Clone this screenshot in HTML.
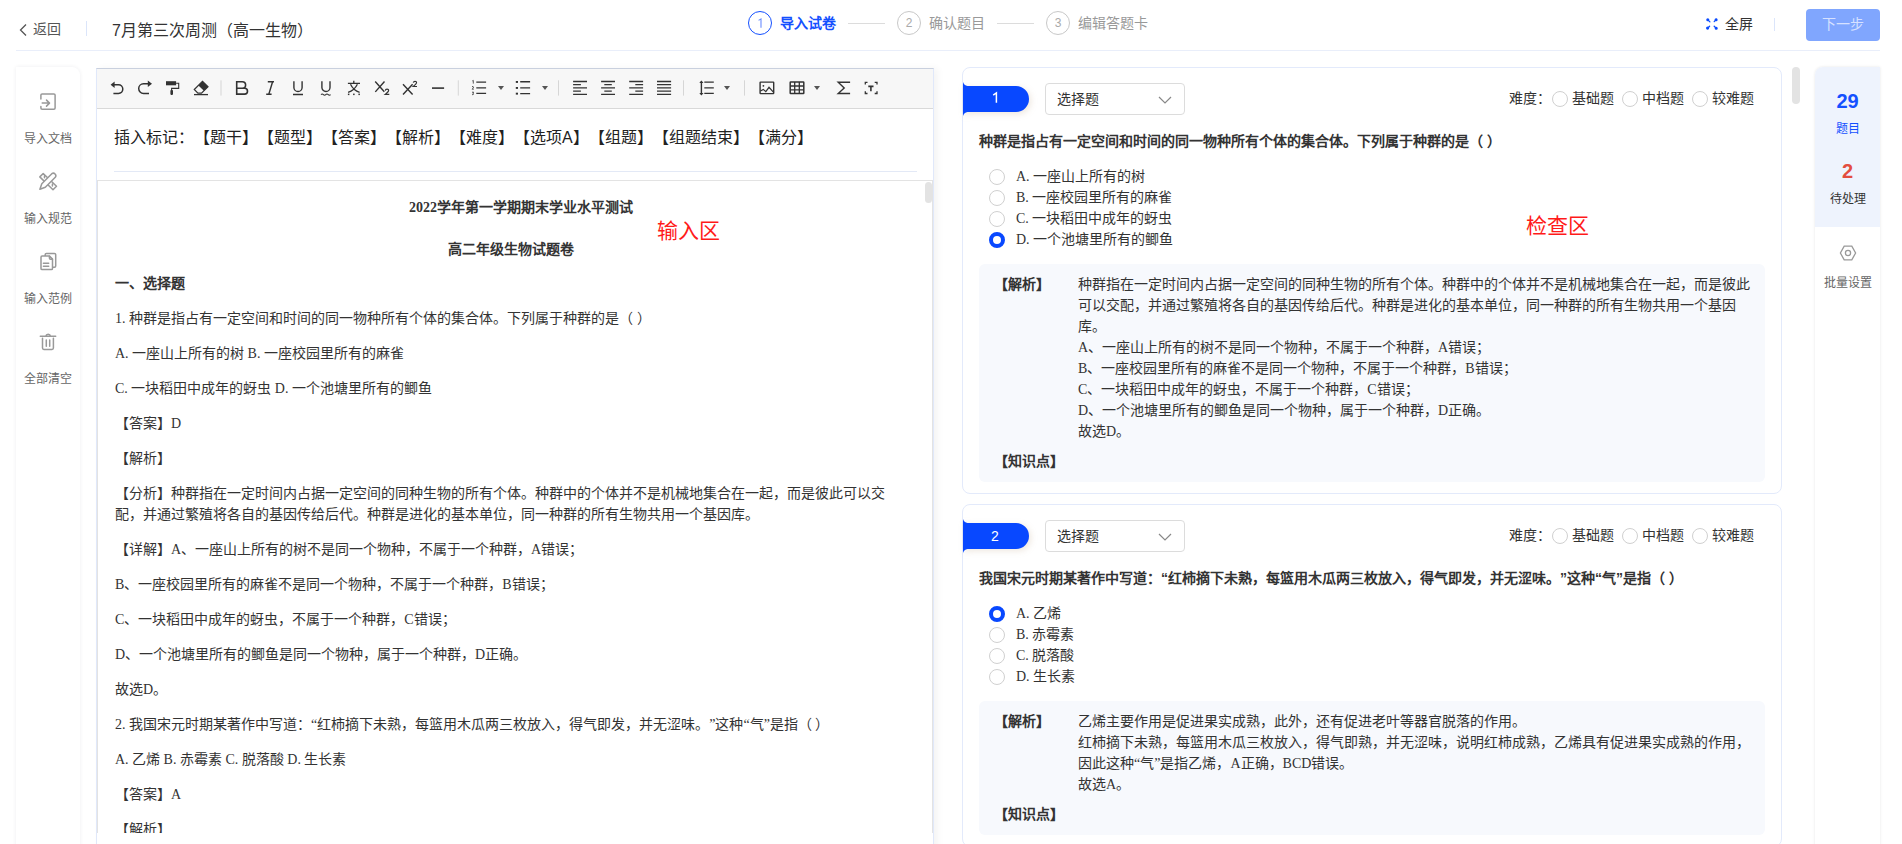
<!DOCTYPE html>
<html lang="zh-CN"><head><meta charset="utf-8">
<style>
*{box-sizing:border-box;margin:0;padding:0;text-spacing-trim:space-all}
html,body{width:1902px;height:844px;overflow:hidden;background:#fff;font-family:"Liberation Sans",sans-serif;color:#333}
.abs{position:absolute;white-space:nowrap}
.hdrline{position:absolute;left:16px;top:50px;width:1864px;height:1px;background:#e9eefa}
.sidebar{position:absolute;left:16px;top:67px;width:64px;height:800px;background:#fff;border-radius:0 8px 0 0;box-shadow:0 0 4px rgba(0,20,60,.07)}
.sb-item{position:absolute;left:0;width:64px;text-align:center;font-size:12px;color:#666}
.editor{position:absolute;left:96px;top:68px;width:838px;height:800px;border:1px solid #e0e8fa;border-top-color:#c9d0de;background:#fff;box-shadow:4px 0 7px rgba(0,0,0,.045)}
.toolbar{position:absolute;left:0;top:0;width:836px;height:40px;background:#f7f7f7;border-bottom:1px solid #d9d9d9}
.serif{font-family:"Liberation Serif",serif}
.ed-content{position:absolute;left:0;top:111px;width:836px;height:653px;border:1px solid #e3e3e3;border-bottom:none;overflow:hidden}
.ln{position:absolute;left:17px;font-size:14px;line-height:21px;color:#333;white-space:nowrap;font-family:"Liberation Serif",serif}
.card{position:absolute;left:962px;width:820px;border:1px solid #e3eafb;border-radius:8px;background:#fff}
.tag{position:absolute;left:0;width:67px;height:26px;background:#0848ff;border-radius:0 13px 13px 0;color:#fff;font-size:14px;text-align:center;line-height:26px;box-shadow:2px 2px 6px rgba(200,160,120,.25)}
.sel{position:absolute;left:82px;width:140px;height:32px;border:1px solid #dcdcdc;border-radius:4px;font-size:14px;line-height:30px;padding-left:11px;color:#333}
.diff{position:absolute;left:546px;font-size:14px;color:#333;line-height:20px;margin-top:-1px}
.radio{display:inline-block;width:16px;height:16px;border:1px solid #d0d0d0;border-radius:50%;vertical-align:middle;background:#fff}
.radio.on{border:4.5px solid #0848ff}
.q{position:absolute;left:16px;font-size:14px;font-weight:bold;color:#333;line-height:20px;white-space:nowrap;font-family:"Liberation Sans",sans-serif}
.opt{position:absolute;left:26px;font-size:14px;line-height:21px;white-space:nowrap;font-family:"Liberation Serif",serif;color:#333}
.opt .radio{position:absolute;left:0;top:3px}
.opt span.t{position:absolute;left:27px;top:0}
.ana{position:absolute;left:16px;width:786px;background:#f7f9fd;border-radius:6px}
.ana .lbl{position:absolute;left:15px;font-size:14px;font-weight:bold;line-height:21px;font-family:"Liberation Sans",sans-serif;color:#333}
.ana .body{position:absolute;left:99px;font-size:14px;line-height:21px;white-space:nowrap;font-family:"Liberation Serif",serif;color:#333}
.stats{position:absolute;left:1815px;top:67px;width:65px;height:800px;background:#fff;border-radius:8px 0 0 0;box-shadow:0 0 3px rgba(0,0,0,.1)}
.red{color:#ff1a1a;font-size:21px;line-height:24px}
</style></head><body>

<!-- header -->
<div class="abs" style="left:17px;top:20px;font-size:14px;line-height:18px;color:#555">
<svg width="10" height="14" viewBox="0 0 10 14" style="position:absolute;left:1px;top:3px"><path d="M8 1.5 L2.5 7 L8 12.5" fill="none" stroke="#555" stroke-width="1.3"/></svg>
<span style="position:absolute;left:16px;top:0">返回</span></div>
<div class="abs" style="left:86px;top:21px;width:1px;height:15px;background:#dbe5fa"></div>
<div class="abs" style="left:112px;top:21px;font-size:16px;line-height:20px;color:#333">7月第三次周测（高一生物）</div>

<div class="abs" style="left:748px;top:11px;width:24px;height:24px;border:1px solid #1f5cff;border-radius:50%;text-align:center;font-size:12px;line-height:22px;color:#4a78ff;border-color:#1450ff"><svg style="position:absolute;left:0;top:0" width="22" height="22" viewBox="749 12 22 22"><path d="M758.6 20.4 L761 18.9 V27.8" fill="none" stroke="#6a8cff" stroke-width="1.1"/></svg></div>
<div class="abs" style="left:780px;top:13px;font-size:14px;line-height:20px;font-weight:bold;color:#1450ff">导入试卷</div>
<div class="abs" style="left:848px;top:23px;width:37px;height:1px;background:#dcdcdc"></div>
<div class="abs" style="left:897px;top:11px;width:24px;height:24px;border:1px solid #c8c8c8;border-radius:50%;text-align:center;font-size:12px;line-height:22px;color:#aaa">2</div>
<div class="abs" style="left:929px;top:13px;font-size:14px;line-height:20px;color:#999">确认题目</div>
<div class="abs" style="left:997px;top:23px;width:37px;height:1px;background:#dcdcdc"></div>
<div class="abs" style="left:1046px;top:11px;width:24px;height:24px;border:1px solid #c8c8c8;border-radius:50%;text-align:center;font-size:12px;line-height:22px;color:#aaa">3</div>
<div class="abs" style="left:1078px;top:13px;font-size:14px;line-height:20px;color:#999">编辑答题卡</div>

<svg class="abs" style="left:1700px;top:12px" width="25" height="23" viewBox="1700 12 25 23"><g stroke="#0a4bff" stroke-width="1.3" stroke-linecap="round" fill="#0a4bff"><path d="M1707.6 19.6 L1709.9 21.9 M1716.3 19.5 L1714.2 21.6 M1707.5 28.3 L1709.6 26.2 M1716.3 28.4 L1714.2 26.2"/><circle cx="1707.8" cy="19.8" r="0.9"/><circle cx="1716.1" cy="19.7" r="0.9"/><circle cx="1707.6" cy="28.1" r="0.9"/><circle cx="1716.2" cy="28.2" r="0.9"/></g></svg>
<div class="abs" style="left:1725px;top:14px;font-size:14px;line-height:20px;color:#333">全屏</div>
<div class="abs" style="left:1774px;top:18px;width:1px;height:13px;background:#dbe5fa"></div>
<div class="abs" style="left:1806px;top:9px;width:74px;height:32px;background:#80a6fe;border-radius:4px;color:#d6e1ff;font-size:14px;line-height:30px;text-align:center">下一步</div>
<div class="hdrline"></div>

<!-- left sidebar -->
<div class="sidebar">
<div class="sb-item" style="top:63px;line-height:18px">导入文档</div>
<div class="sb-item" style="top:143px;line-height:18px">输入规范</div>
<div class="sb-item" style="top:223px;line-height:18px">输入范例</div>
<div class="sb-item" style="top:303px;line-height:18px">全部清空</div>
</div>
<svg class="abs" style="left:36px;top:88px" width="24" height="270" viewBox="36 88 24 270"><g fill="none" stroke="#999" stroke-width="1.5" stroke-linecap="round" stroke-linejoin="round">
<path d="M40.9 99 V95.1 Q40.9 93.9 42.1 93.9 H53.9 Q55.1 93.9 55.1 95.1 V108 Q55.1 109.2 53.9 109.2 H42.1 Q40.9 109.2 40.9 108 V106.6"/>
<path d="M42.2 103.1 H49.4 M46.5 100.1 L49.5 103.1 L46.5 106.1"/>
<path d="M39.8 176.9 L43.2 173.5 L56.5 186.3 L53 189.7 Z M44.5 175.7 V177.7 M52.4 184.1 V186.1"/>
<path d="M41.8 183.7 L51.8 173.7 A2.5 2.5 0 0 1 55.3 177.2 L45.3 187.2 L39.9 189.2 Z" fill="#fff"/>
<rect x="45.2" y="253.4" width="10.5" height="13.8" rx="1.2"/>
<path d="M41 257.2 Q41 256.1 42.1 256.1 H49.5 L52.5 259.1 V268.5 Q52.5 269.6 51.4 269.6 H42.1 Q41 269.6 41 268.5 Z" fill="#fff"/>
<path d="M49.4 256.2 V258 Q49.4 259.2 50.6 259.2 H52.4 M43.4 263.3 H48.7 M43.4 266.3 H48.7"/>
<path d="M40.3 336.3 H55.7 M45.7 336.3 A2.5 2.5 0 0 1 50.6 336.3 M42.5 338.2 V348 Q42.5 349.4 43.9 349.4 H52 Q53.4 349.4 53.4 348 V338.2 M46.3 339.9 V346.3 M49.7 339.9 V346.3"/>
</g></svg>
</div>

<!-- editor -->
<div class="editor">
  <div class="toolbar"></div>
  <div class="abs" style="left:17px;top:58px;font-size:16px;line-height:22px;color:#222">插入标记：【题干】【题型】【答案】【解析】【难度】【选项A】【组题】【组题结束】【满分】</div>
  <div class="abs" style="left:17px;top:102px;width:803px;height:1px;background:#e3e9f6"></div>
  <div class="ed-content">
<div class="ln" style="left:311px;top:16px;font-weight:bold">2022学年第一学期期末学业水平测试</div>
<div class="ln" style="left:350px;top:58px;font-weight:bold">高二年级生物试题卷</div>
<div class="ln" style="top:91.5px"><b>一、选择题</b></div>
<div class="ln" style="top:126.5px">1. 种群是指占有一定空间和时间的同一物种所有个体的集合体。下列属于种群的是（ ）</div>
<div class="ln" style="top:161.5px">A. 一座山上所有的树 B. 一座校园里所有的麻雀</div>
<div class="ln" style="top:196.5px">C. 一块稻田中成年的蚜虫 D. 一个池塘里所有的鲫鱼</div>
<div class="ln" style="top:231.5px">【答案】D</div>
<div class="ln" style="top:266.5px">【解析】</div>
<div class="ln" style="top:301.5px">【分析】种群指在一定时间内占据一定空间的同种生物的所有个体。种群中的个体并不是机械地集合在一起，而是彼此可以交</div>
<div class="ln" style="top:322.5px">配，并通过繁殖将各自的基因传给后代。种群是进化的基本单位，同一种群的所有生物共用一个基因库。</div>
<div class="ln" style="top:357.5px">【详解】A、一座山上所有的树不是同一个物种，不属于一个种群，A错误；</div>
<div class="ln" style="top:392.5px">B、一座校园里所有的麻雀不是同一个物种，不属于一个种群，B错误；</div>
<div class="ln" style="top:427.5px">C、一块稻田中成年的蚜虫，不属于一个种群，C错误；</div>
<div class="ln" style="top:462.5px">D、一个池塘里所有的鲫鱼是同一个物种，属于一个种群，D正确。</div>
<div class="ln" style="top:497.5px">故选D。</div>
<div class="ln" style="top:532.5px">2. 我国宋元时期某著作中写道：“红柿摘下未熟，每篮用木瓜两三枚放入，得气即发，并无涩味。”这种“气”是指（ ）</div>
<div class="ln" style="top:567.5px">A. 乙烯 B. 赤霉素 C. 脱落酸 D. 生长素</div>
<div class="ln" style="top:602.5px">【答案】A</div>
<div class="ln" style="top:637.5px">【解析】</div>
  <div class="abs" style="left:827px;top:1px;width:7px;height:21px;background:#e3e3e3;border-radius:4px"></div>
  </div>
</div>
<svg class="abs" style="left:96px;top:68px" width="838" height="41" viewBox="96 68 838 41"><g fill="none" stroke="#333" stroke-width="1.5">
<path d="M113.4 93.4 H118.5 A4.3 4.3 0 0 0 118.5 84.8 H113.8"/>
<path d="M149 93.4 H143.5 A4.8 4.8 0 0 1 143.5 83.8 H148"/>
<path d="M194 94.6 H208" stroke-width="1.3"/>
<path d="M194.3 89.5 L202.5 81.3 L208 86.7 L201.5 93.1 H197.9 Z" stroke-width="1.2"/>
<path d="M176.1 83.2 H178.7 V88.4 H171.6 V90.5" stroke-width="1.1"/>
<path d="M236.7 81.7 H242.3 A3.3 3.3 0 0 1 242.3 88.3 H236.7 Z M236.7 88.3 H244.6 A2.9 2.9 0 0 1 244.6 94.1 H236.7 Z" stroke-width="1.6"/>
<path d="M267.8 81.7 H274 M266.2 94.3 H271.6 M272.6 81.7 L268.8 94.3" stroke-width="1.4"/>
<path d="M293.9 81.2 V87.4 A4.1 4.1 0 0 0 302.1 87.4 V81.2 M293 94.5 H303" stroke-width="1.4"/>
<path d="M321.9 81.2 V87.4 A4.05 4.05 0 0 0 330 87.4 V81.2" stroke-width="1.4"/>
<path d="M321 94.6 q1.2 -1.3 2.4 0 t2.4 0 t2.4 0 t2.4 0" stroke-width="1.1"/>
<path d="M353.8 80.8 V83 M347.9 83.3 H360 M350.5 84.3 Q353.5 90.5 359.6 92.4 M357.4 84.3 Q354.3 90.5 348.1 92.4" stroke-width="1.3"/>
<path d="M375.2 81.5 L384.3 91.7 M384.5 81.5 L375.3 91.9" stroke-width="1.4"/>
<path d="M385.3 90.6 Q385.5 89.1 387 89.1 Q388.7 89.1 388.6 90.6 Q388.5 91.6 385.2 94.4 H389.3" stroke-width="1.2"/>
<path d="M403 84.2 L412.6 94.5 M412.6 84.2 L403 94.5" stroke-width="1.4"/>
<path d="M413.3 82.7 Q413.6 81.3 415 81.3 Q416.6 81.3 416.5 82.7 Q416.4 83.7 413.2 86.5 H417" stroke-width="1.2"/>
<path d="M432 88.1 H444.1" stroke-width="1.6"/>
<path d="M476.3 82.1 H486.1 M476.3 87.9 H486.1 M476.3 93.4 H486.1" stroke-width="1.4"/>
<path d="M472.3 80.9 L473.3 80.4 V83.6 M472 86.7 Q473.3 86 473.6 87 Q473.5 88 472.1 89.2 H473.8 M472 92.2 H473.7 L472.8 93.2 Q473.9 93.5 473.5 94.3 L472 94.8" stroke-width="0.8"/>
<path d="M520.2 81.8 H530.1 M520.2 87.9 H530.1 M520.2 93.6 H530.1" stroke-width="1.4"/>
<path d="M573.1 81.5 H587 M573.1 84.7 H580.9 M573.1 87.9 H587 M573.1 91.2 H580.9 M573.1 94.4 H587" stroke-width="1.3"/>
<path d="M601.1 81.5 H615 M604.3 84.7 H611.8 M601.1 87.9 H615 M604.3 91.2 H611.8 M601.1 94.4 H615" stroke-width="1.3"/>
<path d="M629.2 81.5 H643.1 M635.3 84.7 H643.1 M629.2 87.9 H643.1 M635.3 91.2 H643.1 M629.2 94.4 H643.1" stroke-width="1.3"/>
<path d="M657 81.5 H671.1 M657 84.7 H671.1 M657 87.9 H671.1 M657 91.2 H671.1 M657 94.4 H671.1" stroke-width="1.3"/>
<path d="M701.4 81.5 V94.3 M704.3 82.1 H713.8 M704.3 87.9 H713.8 M704.3 93.4 H713.8" stroke-width="1.4"/>
<rect x="760.1" y="82.1" width="13.6" height="11.5" rx="0.5" stroke-width="1.4"/>
<path d="M760.4 91 L763.3 89.4 L765.8 91.6 L769 87.3 L773.4 92.2" stroke-width="1.2"/>
<rect x="790.2" y="82.1" width="13.6" height="11.5" rx="0.5" stroke-width="1.5"/>
<path d="M794.7 82.1 V93.6 M799.3 82.1 V93.6 M790.2 86 H803.8 M790.2 89.8 H803.8" stroke-width="1.3"/>
<path d="M850.1 82.3 H838.2 L844.2 88 L838.2 93.5 H850.1" stroke-width="1.4"/>
<path d="M865.3 84.6 V82.3 H867.5 M874.7 82.3 H877 V84.6 M877 91.2 V93.5 H874.7 M867.5 93.5 H865.3 V91.2" stroke-width="1.3"/>
<path d="M868.3 86.4 H873.5 M870.9 86.4 V91.3" stroke-width="1.6"/>
</g>
<g fill="#333">
<path d="M110.6 84.8 L114.6 81.6 L114.6 88 Z"/>
<path d="M152 83.8 L147.8 80.6 L147.8 87 Z"/>
<rect x="166" y="81.2" width="10.1" height="4.1"/>
<rect x="170.4" y="90" width="2.6" height="4.9" rx="0.8"/>
<path d="M198.4 85.4 L202.5 81.3 L208 86.7 L203.9 90.8 Z"/>
<rect x="347.9" y="93.6" width="1.5" height="1.5"/><rect x="353.1" y="93.6" width="1.5" height="1.5"/><rect x="358.4" y="93.6" width="1.5" height="1.5"/>
<rect x="515.8" y="81" width="2.2" height="1.9"/><rect x="515.8" y="87" width="2.2" height="1.9"/><rect x="515.8" y="92.7" width="2.2" height="1.9"/>
<path d="M699.3 83 L701.4 80.5 L703.5 83 Z M699.3 93 L701.4 95.5 L703.5 93 Z"/>
<circle cx="763.4" cy="85.8" r="0.9"/>
</g>
<g fill="#555">
<path d="M498 86.1 H504 L501 89.9 Z"/><path d="M542 86.1 H548 L545 89.9 Z"/><path d="M724 86.1 H730 L727 89.9 Z"/><path d="M814 86.1 H820 L817 89.9 Z"/>
</g>
<g fill="#d6d6d6"><rect x="220.5" y="80.3" width="1" height="15.3"/><rect x="457.8" y="80.3" width="1" height="15.3"/><rect x="558" y="80.3" width="1" height="15.3"/><rect x="683" y="80.3" width="1" height="15.3"/><rect x="744" y="80.3" width="1" height="15.3"/></g>
</svg>
<div class="abs" style="left:657px;top:219px" ><span class="red">输入区</span></div>

<!-- cards -->
<div class="card" style="top:67px;height:427px">
<svg style="position:absolute;left:0;top:14px;filter:drop-shadow(2px 2px 3px rgba(160,120,80,.18))" width="72" height="34" viewBox="0 0 72 34"><path d="M0 0 Q1 3.3 4.5 4 H53 A13 13 0 0 1 53 30 H4.5 Q1 30.7 0 34 Z" fill="#0848ff"/><path d="M30.2 13.2 L33.4 11 V20.8" fill="none" stroke="#fff" stroke-width="1.5"/></svg>
<div class="sel" style="top:15px">选择题<svg style="position:absolute;left:112px;top:12px" width="14" height="8" viewBox="0 0 14 8"><path d="M1 1 L7 7 L13 1" fill="none" stroke="#888" stroke-width="1.2"/></svg></div>
<div class="diff" style="top:21px">难度：<span class="radio" style="margin:0 4px 0 1px"></span>基础题 <span class="radio" style="margin:0 4px 0 4px"></span>中档题 <span class="radio" style="margin:0 4px 0 4px"></span>较难题</div>
<div class="q" style="top:63px">种群是指占有一定空间和时间的同一物种所有个体的集合体。下列属于种群的是（ ）</div>
<div class="opt" style="top:97.5px"><span class="radio"></span><span class="t">A. 一座山上所有的树</span></div>
<div class="opt" style="top:118.5px"><span class="radio"></span><span class="t">B. 一座校园里所有的麻雀</span></div>
<div class="opt" style="top:139.5px"><span class="radio"></span><span class="t">C. 一块稻田中成年的蚜虫</span></div>
<div class="opt" style="top:160.5px"><span class="radio on"></span><span class="t">D. 一个池塘里所有的鲫鱼</span></div>
<div class="ana" style="top:196px;height:218px"><div class="lbl" style="top:10px">【解析】</div>
<div class="body" style="top:10px">种群指在一定时间内占据一定空间的同种生物的所有个体。种群中的个体并不是机械地集合在一起，而是彼此</div>
<div class="body" style="top:31px">可以交配，并通过繁殖将各自的基因传给后代。种群是进化的基本单位，同一种群的所有生物共用一个基因</div>
<div class="body" style="top:52px">库。</div>
<div class="body" style="top:73px">A、一座山上所有的树不是同一个物种，不属于一个种群，A错误；</div>
<div class="body" style="top:94px">B、一座校园里所有的麻雀不是同一个物种，不属于一个种群，B错误；</div>
<div class="body" style="top:115px">C、一块稻田中成年的蚜虫，不属于一个种群，C错误；</div>
<div class="body" style="top:136px">D、一个池塘里所有的鲫鱼是同一个物种，属于一个种群，D正确。</div>
<div class="body" style="top:157px">故选D。</div>
<div class="lbl" style="top:187px">【知识点】</div></div>
</div>
<div class="card" style="top:504px;height:343px">
<svg style="position:absolute;left:0;top:14px;filter:drop-shadow(2px 2px 3px rgba(160,120,80,.18))" width="72" height="34" viewBox="0 0 72 34"><path d="M0 0 Q1 3.3 4.5 4 H53 A13 13 0 0 1 53 30 H4.5 Q1 30.7 0 34 Z" fill="#0848ff"/></svg><div style="position:absolute;left:0;top:18px;width:64px;text-align:center;color:#fff;font-size:14px;line-height:26px">2</div>
<div class="sel" style="top:15px">选择题<svg style="position:absolute;left:112px;top:12px" width="14" height="8" viewBox="0 0 14 8"><path d="M1 1 L7 7 L13 1" fill="none" stroke="#888" stroke-width="1.2"/></svg></div>
<div class="diff" style="top:21px">难度：<span class="radio" style="margin:0 4px 0 1px"></span>基础题 <span class="radio" style="margin:0 4px 0 4px"></span>中档题 <span class="radio" style="margin:0 4px 0 4px"></span>较难题</div>
<div class="q" style="top:63px">我国宋元时期某著作中写道：“红柿摘下未熟，每篮用木瓜两三枚放入，得气即发，并无涩味。”这种“气”是指（ ）</div>
<div class="opt" style="top:97.5px"><span class="radio on"></span><span class="t">A. 乙烯</span></div>
<div class="opt" style="top:118.5px"><span class="radio"></span><span class="t">B. 赤霉素</span></div>
<div class="opt" style="top:139.5px"><span class="radio"></span><span class="t">C. 脱落酸</span></div>
<div class="opt" style="top:160.5px"><span class="radio"></span><span class="t">D. 生长素</span></div>
<div class="ana" style="top:196px;height:134px"><div class="lbl" style="top:10px">【解析】</div>
<div class="body" style="top:10px">乙烯主要作用是促进果实成熟，此外，还有促进老叶等器官脱落的作用。</div>
<div class="body" style="top:31px">红柿摘下未熟，每篮用木瓜三枚放入，得气即熟，并无涩味，说明红柿成熟，乙烯具有促进果实成熟的作用，</div>
<div class="body" style="top:52px">因此这种“气”是指乙烯，A正确，BCD错误。</div>
<div class="body" style="top:73px">故选A。</div>
<div class="lbl" style="top:103px">【知识点】</div></div>
</div>
<div class="abs" style="left:1526px;top:214px"><span class="red">检查区</span></div>
<div class="abs" style="left:1792px;top:67px;width:8px;height:37px;background:#e3e3e3;border-radius:4px"></div>

<!-- stats -->
<div class="stats">
<div style="position:absolute;left:0;top:0;width:65px;height:160px;background:#eef3fd;border-radius:8px 0 0 0"></div>
<div class="abs" style="left:0;width:65px;text-align:center;top:23px;font-size:20px;line-height:22px;font-weight:bold;color:#1450ff">29</div>
<div class="abs" style="left:0;width:65px;text-align:center;top:54px;font-size:12px;line-height:16px;color:#1450ff">题目</div>
<div class="abs" style="left:0;width:65px;text-align:center;top:93px;font-size:20px;line-height:22px;font-weight:bold;color:#e34d3f">2</div>
<div class="abs" style="left:0;width:65px;text-align:center;top:124px;font-size:12px;line-height:16px;color:#333">待处理</div>
<svg class="abs" style="left:24px;top:177px" width="18" height="18" viewBox="0 0 18 18"><g fill="none" stroke="#999" stroke-width="1.3"><path d="M5.2 2.2 H12.8 L16.6 9 L12.8 15.8 H5.2 L1.4 9 Z"/><circle cx="9" cy="9" r="2.6"/></g></svg>
<div class="abs" style="left:0;width:65px;text-align:center;top:208px;font-size:12px;line-height:16px;color:#666">批量设置</div>
</div>

</body></html>
